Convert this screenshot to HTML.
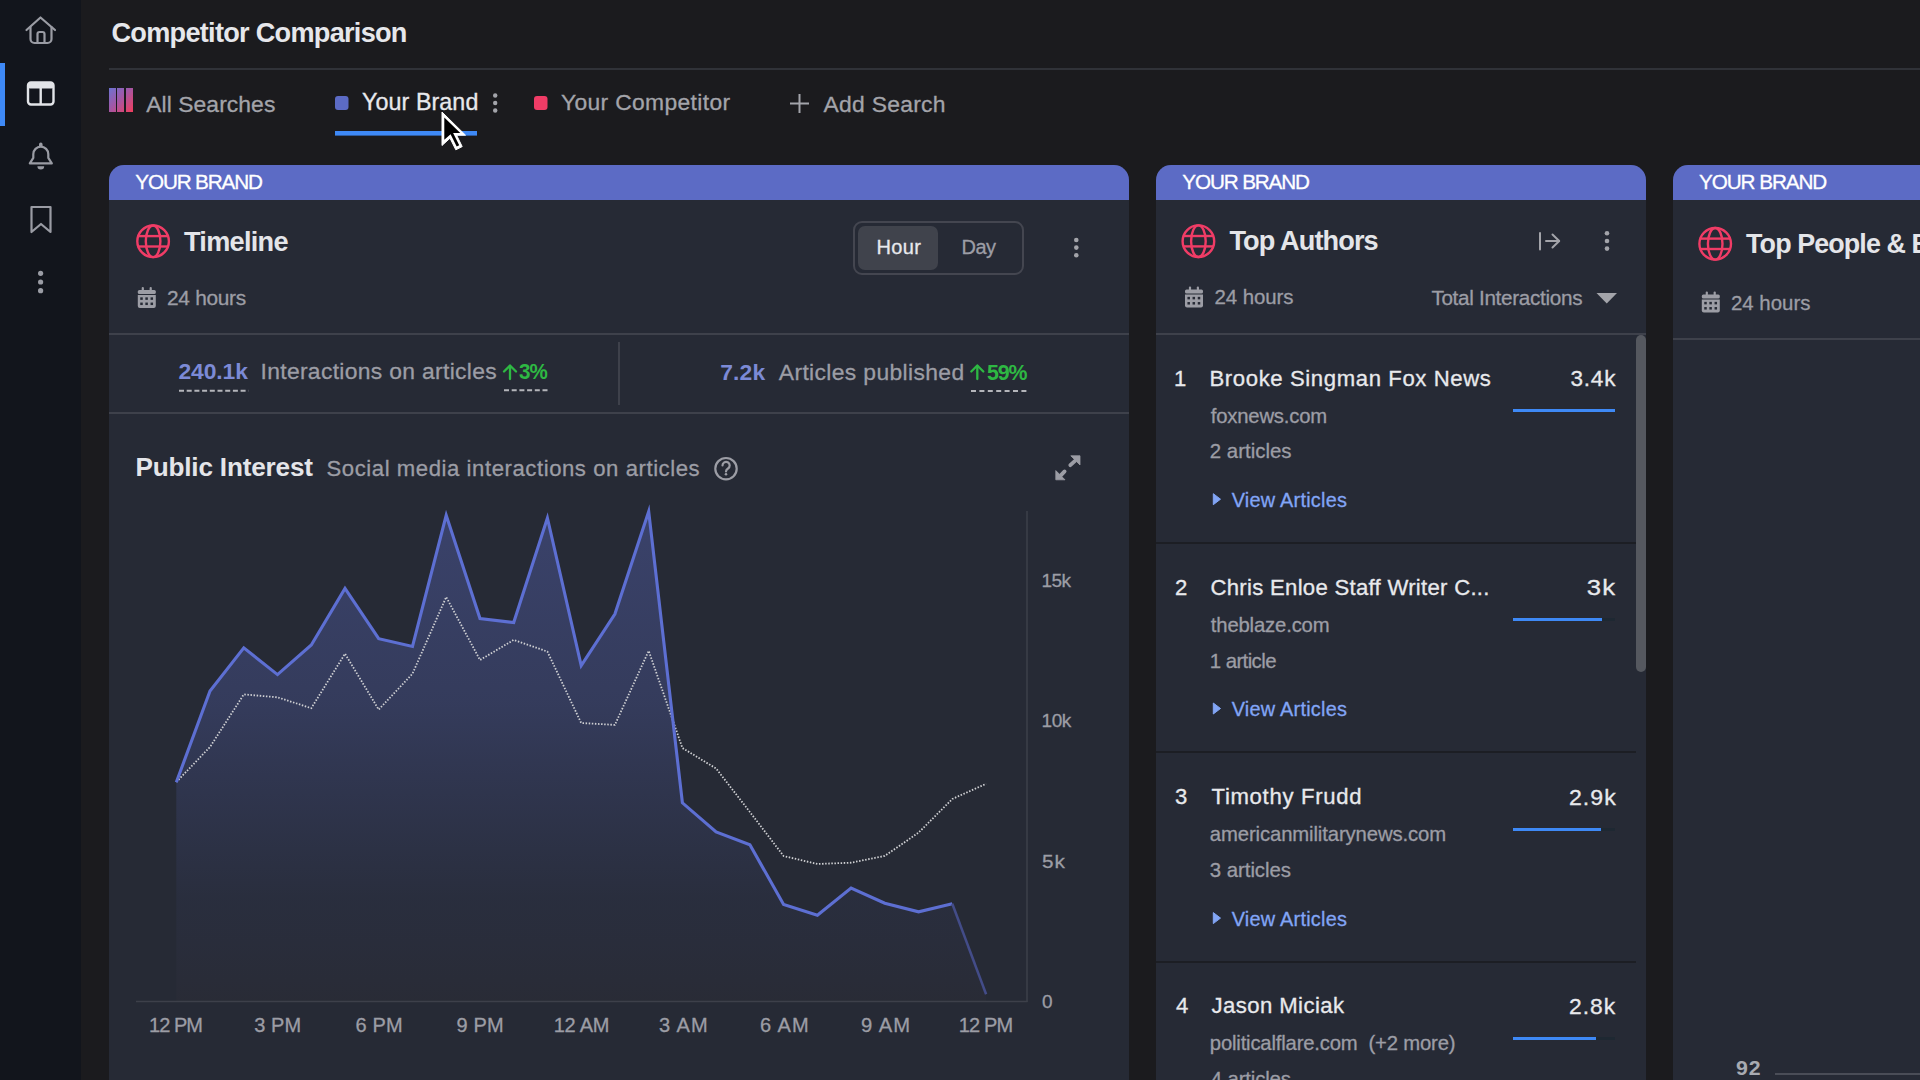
<!DOCTYPE html>
<html><head><meta charset="utf-8"><title>Competitor Comparison</title>
<style>
html,body{margin:0;padding:0;width:1920px;height:1080px;overflow:hidden;background:#1b1b1e;}
body{position:relative;font-family:"Liberation Sans",sans-serif;}
.t{position:absolute;white-space:pre;}
.r{-webkit-text-stroke:0.3px currentColor;}
.abs{position:absolute;}
</style></head><body>
<div class="abs" style="left:0px;top:0px;width:81px;height:1080px;background:#12151c;"></div>
<div class="abs" style="left:0px;top:63px;width:5px;height:63px;background:#3e89f6;"></div>
<div class="abs" style="left:109px;top:68px;width:1811px;height:2px;background:#303238;"></div>
<div class="abs" style="left:109px;top:165px;width:1020px;height:960px;background:#262a35;border-radius:15px 15px 0 0;overflow:hidden"><div style="height:35px;background:#5c6bc5"></div></div>
<div class="abs" style="left:1156px;top:165px;width:490px;height:960px;background:#262a35;border-radius:15px 15px 0 0;overflow:hidden"><div style="height:35px;background:#5c6bc5"></div></div>
<div class="abs" style="left:1673px;top:165px;width:400px;height:960px;background:#262a35;border-radius:15px 15px 0 0;overflow:hidden"><div style="height:35px;background:#5c6bc5"></div></div>
<div class="abs" style="left:109px;top:333px;width:1020px;height:2px;background:#3e414b;"></div>
<div class="abs" style="left:109px;top:412px;width:1020px;height:2px;background:#3e414b;"></div>
<div class="abs" style="left:618px;top:342px;width:2px;height:63px;background:#3e414b;"></div>
<div class="abs" style="left:853px;top:221px;width:167px;height:50px;border:2px solid #444650;border-radius:9px"></div>
<div class="abs" style="left:858px;top:226px;width:80px;height:44px;background:#40434c;border-radius:7px;"></div>
<div class="abs" style="left:1156px;top:333px;width:490px;height:2px;background:#3e414b;"></div>
<div class="abs" style="left:1156px;top:541.5px;width:480px;height:2px;background:#1c1e24;"></div>
<div class="abs" style="left:1156px;top:751px;width:480px;height:2px;background:#1c1e24;"></div>
<div class="abs" style="left:1156px;top:960.5px;width:480px;height:2px;background:#1c1e24;"></div>
<div class="abs" style="left:1635.5px;top:335px;width:10px;height:337px;background:#55585f;border-radius:5px;"></div>
<div class="abs" style="left:1513px;top:408.8px;width:101.8px;height:3.2px;background:#1e2832;"></div>
<div class="abs" style="left:1513px;top:408.8px;width:101.9px;height:3.2px;background:#3e89f6;"></div>
<div class="abs" style="left:1513px;top:618.1px;width:101.8px;height:3.2px;background:#1e2832;"></div>
<div class="abs" style="left:1513px;top:618.1px;width:89.2px;height:3.2px;background:#3e89f6;"></div>
<div class="abs" style="left:1513px;top:827.7px;width:101.8px;height:3.2px;background:#1e2832;"></div>
<div class="abs" style="left:1513px;top:827.7px;width:87.5px;height:3.2px;background:#3e89f6;"></div>
<div class="abs" style="left:1513px;top:1036.6px;width:101.8px;height:3.2px;background:#1e2832;"></div>
<div class="abs" style="left:1513px;top:1036.6px;width:83px;height:3.2px;background:#3e89f6;"></div>
<div class="abs" style="left:1673px;top:338px;width:247px;height:2px;background:#3e414b;"></div>
<div class="abs" style="left:1775px;top:1073px;width:145px;height:2px;background:#4a4d57;"></div>
<svg class="abs" style="left:0;top:0" width="1920" height="1080" viewBox="0 0 1920 1080">
<g fill="none" stroke="#9a9ca4" stroke-width="2.2" stroke-linecap="round" stroke-linejoin="round"><path d="M26.5 30 L40.5 17.5 L55 30"/><path d="M30.5 27 V39 a4 4 0 0 0 4 4 H47.5 a4 4 0 0 0 4 -4 V27"/><path d="M37.5 43 V34 a2 2 0 0 1 2 -2 H42.5 a2 2 0 0 1 2 2 V43"/></g>
<g><rect x="28" y="82.5" width="25.5" height="22" rx="3" fill="none" stroke="#e2e4e8" stroke-width="2.4"/><rect x="28" y="82.5" width="25.5" height="6" rx="2" fill="#e2e4e8"/><line x1="40.7" y1="87" x2="40.7" y2="104" stroke="#e2e4e8" stroke-width="2.4"/></g>
<g fill="none" stroke="#9a9ca4" stroke-width="2.2" stroke-linejoin="round" stroke-linecap="round"><path d="M29.8 163.4 H51.8 L48.3 157.8 V154.2 a7.5 7.5 0 0 0 -15 0 V157.8 Z"/></g><rect x="39" y="142.6" width="3.6" height="4.5" rx="1.8" fill="#9a9ca4"/><path d="M37.4 166.3 h6.8 a3.4 3.2 0 0 1 -6.8 0z" fill="#9a9ca4"/>
<path d="M31.5 207 H50.5 V232 L41 224 L31.5 232 Z" fill="none" stroke="#9a9ca4" stroke-width="2.2" stroke-linejoin="round"/>
<circle cx="40.6" cy="273.3" r="2.6" fill="#9a9ca4"/>
<circle cx="40.6" cy="282" r="2.6" fill="#9a9ca4"/>
<circle cx="40.6" cy="290.7" r="2.6" fill="#9a9ca4"/>
<defs><linearGradient id="ag" x1="108" y1="88" x2="133" y2="112" gradientUnits="userSpaceOnUse"><stop offset="0" stop-color="#6a74d4"/><stop offset="0.45" stop-color="#a058a8"/><stop offset="1" stop-color="#f33d5c"/></linearGradient><linearGradient id="cf" x1="0" y1="511" x2="0" y2="1001" gradientUnits="userSpaceOnUse"><stop offset="0" stop-color="#5c6bc5" stop-opacity="0.37"/><stop offset="0.39" stop-color="#5c6bc5" stop-opacity="0.27"/><stop offset="0.55" stop-color="#5c6bc5" stop-opacity="0.18"/><stop offset="0.79" stop-color="#5c6bc5" stop-opacity="0.06"/><stop offset="1" stop-color="#4a3a40" stop-opacity="0.08"/></linearGradient></defs>
<rect x="109" y="88" width="7" height="24" fill="url(#ag)"/>
<rect x="117" y="88" width="7" height="24" fill="url(#ag)"/>
<rect x="126" y="88" width="7" height="24" fill="url(#ag)"/>
<rect x="335" y="96" width="13.5" height="14" rx="3" fill="#5c6bc5"/>
<rect x="534" y="96" width="13.5" height="14" rx="3" fill="#f03c66"/>
<circle cx="495.2" cy="95.5" r="2.2" fill="#a3a4aa"/>
<circle cx="495.2" cy="103" r="2.2" fill="#a3a4aa"/>
<circle cx="495.2" cy="110.5" r="2.2" fill="#a3a4aa"/>
<g stroke="#a3a4aa" stroke-width="2"><line x1="790" y1="103.5" x2="809" y2="103.5"/><line x1="799.5" y1="94" x2="799.5" y2="113"/></g>
<rect x="335" y="131" width="142" height="4.6" fill="#3e89f6"/>
<g fill="none" stroke="#f03c66" stroke-width="2.4"><circle cx="153.1" cy="241.3" r="15.8"/><ellipse cx="153.1" cy="241.3" rx="7.3" ry="15.8"/><line x1="137.6" y1="236.10000000000002" x2="168.6" y2="236.10000000000002"/><line x1="137.6" y1="246.5" x2="168.6" y2="246.5"/></g>
<g fill="none" stroke="#f03c66" stroke-width="2.4"><circle cx="1198.4" cy="241.2" r="15.8"/><ellipse cx="1198.4" cy="241.2" rx="7.3" ry="15.8"/><line x1="1182.9" y1="236.0" x2="1213.9" y2="236.0"/><line x1="1182.9" y1="246.39999999999998" x2="1213.9" y2="246.39999999999998"/></g>
<g fill="none" stroke="#f03c66" stroke-width="2.4"><circle cx="1715.2" cy="243.8" r="15.8"/><ellipse cx="1715.2" cy="243.8" rx="7.3" ry="15.8"/><line x1="1699.7" y1="238.60000000000002" x2="1730.7" y2="238.60000000000002"/><line x1="1699.7" y1="249.0" x2="1730.7" y2="249.0"/></g>
<g fill="#9c9da5"><rect x="137.8" y="290" width="18" height="4" rx="1.5"/><rect x="141.70000000000002" y="287" width="2.2" height="4" rx="1"/><rect x="149.60000000000002" y="287" width="2.2" height="4" rx="1"/><path d="M137.8 295 H155.8 V306 a2 2 0 0 1 -2 2 H139.8 a2 2 0 0 1 -2 -2 Z"/></g><rect x="140.25" y="297.35" width="2.5" height="2.5" fill="#262a35"/><rect x="140.25" y="302.55" width="2.5" height="2.5" fill="#262a35"/><rect x="145.35000000000002" y="297.35" width="2.5" height="2.5" fill="#262a35"/><rect x="145.35000000000002" y="302.55" width="2.5" height="2.5" fill="#262a35"/><rect x="150.55" y="297.35" width="2.5" height="2.5" fill="#262a35"/><rect x="150.55" y="302.55" width="2.5" height="2.5" fill="#262a35"/>
<g fill="#9c9da5"><rect x="1185" y="289.5" width="18" height="4" rx="1.5"/><rect x="1188.9" y="286.5" width="2.2" height="4" rx="1"/><rect x="1196.8" y="286.5" width="2.2" height="4" rx="1"/><path d="M1185 294.5 H1203 V305.5 a2 2 0 0 1 -2 2 H1187 a2 2 0 0 1 -2 -2 Z"/></g><rect x="1187.45" y="296.85" width="2.5" height="2.5" fill="#262a35"/><rect x="1187.45" y="302.05" width="2.5" height="2.5" fill="#262a35"/><rect x="1192.55" y="296.85" width="2.5" height="2.5" fill="#262a35"/><rect x="1192.55" y="302.05" width="2.5" height="2.5" fill="#262a35"/><rect x="1197.75" y="296.85" width="2.5" height="2.5" fill="#262a35"/><rect x="1197.75" y="302.05" width="2.5" height="2.5" fill="#262a35"/>
<g fill="#9c9da5"><rect x="1701.8" y="294.5" width="18" height="4" rx="1.5"/><rect x="1705.7" y="291.5" width="2.2" height="4" rx="1"/><rect x="1713.6" y="291.5" width="2.2" height="4" rx="1"/><path d="M1701.8 299.5 H1719.8 V310.5 a2 2 0 0 1 -2 2 H1703.8 a2 2 0 0 1 -2 -2 Z"/></g><rect x="1704.25" y="301.85" width="2.5" height="2.5" fill="#262a35"/><rect x="1704.25" y="307.05" width="2.5" height="2.5" fill="#262a35"/><rect x="1709.35" y="301.85" width="2.5" height="2.5" fill="#262a35"/><rect x="1709.35" y="307.05" width="2.5" height="2.5" fill="#262a35"/><rect x="1714.55" y="301.85" width="2.5" height="2.5" fill="#262a35"/><rect x="1714.55" y="307.05" width="2.5" height="2.5" fill="#262a35"/>
<circle cx="1076.3" cy="240" r="2.3" fill="#a3a4aa"/>
<circle cx="1076.3" cy="247.6" r="2.3" fill="#a3a4aa"/>
<circle cx="1076.3" cy="255.2" r="2.3" fill="#a3a4aa"/>
<circle cx="1607" cy="233.3" r="2.3" fill="#a3a4aa"/>
<circle cx="1607" cy="241" r="2.3" fill="#a3a4aa"/>
<circle cx="1607" cy="248.6" r="2.3" fill="#a3a4aa"/>
<g stroke="#a3a4aa" stroke-width="2" fill="none" stroke-linecap="round" stroke-linejoin="round"><line x1="1540" y1="233" x2="1540" y2="249.5"/><line x1="1546" y1="241" x2="1559" y2="241"/><path d="M1552.5 234.5 L1559.2 241 L1552.5 247.5"/></g>
<path d="M1596.5 293 H1617 L1606.75 303.5 Z" fill="#a3a4aa"/>
<g stroke="#2eb843" stroke-width="2.3" fill="none" stroke-linecap="round" stroke-linejoin="round"><line x1="510" y1="366" x2="510" y2="379"/><path d="M504 371.5 L510 365.5 L516 371.5"/></g>
<g stroke="#2eb843" stroke-width="2.3" fill="none" stroke-linecap="round" stroke-linejoin="round"><line x1="977.3" y1="366" x2="977.3" y2="379"/><path d="M971.3 371.5 L977.3 365.5 L983.3 371.5"/></g>
<line x1="179" y1="390.8" x2="248.5" y2="390.8" stroke="#b4b5ba" stroke-width="2" stroke-dasharray="5 2.7"/>
<line x1="504" y1="390.2" x2="547.5" y2="390.2" stroke="#b4b5ba" stroke-width="2" stroke-dasharray="5 2.7"/>
<line x1="971" y1="391" x2="1027.5" y2="391" stroke="#b4b5ba" stroke-width="2" stroke-dasharray="5 3.4"/>
<circle cx="726" cy="468.7" r="10.7" fill="none" stroke="#9c9da5" stroke-width="2.2"/><path d="M722.5 465.5 a3.6 3.6 0 1 1 5.5 3 c-1.5 0.9 -2 1.6 -2 3" fill="none" stroke="#9c9da5" stroke-width="2.2" stroke-linecap="round"/><circle cx="726" cy="474.3" r="1.3" fill="#9c9da5"/>
<g fill="#9c9da5" stroke="#9c9da5" stroke-width="0.8" stroke-linejoin="round"><path d="M1070.8 455.8 H1080 V465 Z"/><path d="M1055.8 470.6 V479.8 H1065 Z"/></g><g stroke="#9c9da5" stroke-width="3.8" stroke-linecap="round"><line x1="1075" y1="460.8" x2="1070.3" y2="465.2"/><line x1="1060.8" y1="475.4" x2="1064.6" y2="471.4"/></g>
<path d="M176.3,1001 L176.3,782.3 L210.0,691.0 L243.8,647.9 L277.5,674.6 L311.3,645.0 L345.0,588.5 L378.7,638.7 L412.5,646.5 L446.2,515.3 L480.0,618.6 L513.7,622.6 L547.4,518.0 L581.2,665.7 L614.9,614.0 L648.7,511.5 L682.4,802.8 L716.1,832.0 L749.9,844.8 L783.6,904.4 L817.4,915.3 L851.1,888.0 L884.8,903.2 L918.6,911.8 L952.3,903.8 L986.1,994.2 L986.1,1001 Z" fill="url(#cf)"/>
<line x1="136" y1="1001.5" x2="1027.5" y2="1001.5" stroke="#3d404a" stroke-width="1.5"/>
<line x1="1027" y1="511" x2="1027" y2="1002" stroke="#3d404a" stroke-width="1.5"/>
<polyline points="176.3,782.0 210.0,747.0 243.8,694.4 277.5,697.3 311.3,708.2 345.0,653.7 378.7,709.6 412.5,673.7 446.2,597.0 480.0,660.0 513.7,639.9 547.4,651.6 581.2,723.0 614.9,724.9 648.7,650.8 682.4,748.0 716.1,768.5 749.9,812.0 783.6,856.0 817.4,864.0 851.1,862.7 884.8,855.9 918.6,832.6 952.3,799.0 986.1,783.8" fill="none" stroke="#cfd0d3" stroke-width="1.8" stroke-dasharray="1.5 1.6"/>
<polyline points="176.3,782.3 210.0,691.0 243.8,647.9 277.5,674.6 311.3,645.0 345.0,588.5 378.7,638.7 412.5,646.5 446.2,515.3 480.0,618.6 513.7,622.6 547.4,518.0 581.2,665.7 614.9,614.0 648.7,511.5 682.4,802.8 716.1,832.0 749.9,844.8 783.6,904.4 817.4,915.3 851.1,888.0 884.8,903.2 918.6,911.8 952.3,903.8" fill="none" stroke="#5d6fd2" stroke-width="3.1" stroke-linejoin="miter" stroke-miterlimit="10"/>
<line x1="952.3" y1="903.8" x2="986.1" y2="994.2" stroke="#434c88" stroke-width="2.5"/>
<path d="M1213.3 493.7 V504.7 L1220.5 499.2 Z" fill="#82a5f5" stroke="#82a5f5" stroke-width="1" stroke-linejoin="round"/>
<path d="M1213.3 703.0 V714.0 L1220.5 708.5 Z" fill="#82a5f5" stroke="#82a5f5" stroke-width="1" stroke-linejoin="round"/>
<path d="M1213.3 912.6 V923.6 L1220.5 918.1 Z" fill="#82a5f5" stroke="#82a5f5" stroke-width="1" stroke-linejoin="round"/>
<path d="M1213.3 1121.5 V1132.5 L1220.5 1127.0 Z" fill="#82a5f5" stroke="#82a5f5" stroke-width="1" stroke-linejoin="round"/>
</svg>
<div class="t" style="left:111.5px;top:19px;font-size:27.14px;line-height:27.14px;font-weight:700;letter-spacing:-0.725px;color:#e6e7eb">Competitor Comparison</div>
<div class="t r" style="left:146.25px;top:93.3px;font-size:22.86px;line-height:22.86px;font-weight:400;letter-spacing:0.068px;color:#a3a4aa">All Searches</div>
<div class="t r" style="left:362px;top:90.8px;font-size:23.29px;line-height:23.29px;font-weight:400;letter-spacing:0.078px;color:#e8e9ec">Your Brand</div>
<div class="t r" style="left:561px;top:90.8px;font-size:22.86px;line-height:22.86px;font-weight:400;letter-spacing:0.336px;color:#a3a4aa">Your Competitor</div>
<div class="t r" style="left:823.6px;top:93px;font-size:22.86px;line-height:22.86px;font-weight:400;letter-spacing:0.267px;color:#a3a4aa">Add Search</div>
<div class="t r" style="left:135.25px;top:172px;font-size:20.71px;line-height:20.71px;font-weight:400;letter-spacing:-1.139px;color:#ffffff">YOUR BRAND</div>
<div class="t r" style="left:1182.3px;top:172px;font-size:20.71px;line-height:20.71px;font-weight:400;letter-spacing:-1.144px;color:#ffffff">YOUR BRAND</div>
<div class="t r" style="left:1699px;top:172px;font-size:20.71px;line-height:20.71px;font-weight:400;letter-spacing:-1.083px;color:#ffffff">YOUR BRAND</div>
<div class="t" style="left:184px;top:228px;font-size:27.14px;line-height:27.14px;font-weight:700;letter-spacing:-0.714px;color:#e4e5e9">Timeline</div>
<div class="t r" style="left:167px;top:288.3px;font-size:20.86px;line-height:20.86px;font-weight:400;letter-spacing:-0.286px;color:#9c9da5">24 hours</div>
<div class="t r" style="left:876.6px;top:237px;font-size:20.0px;line-height:20.0px;font-weight:400;letter-spacing:0.333px;color:#e8e9ec">Hour</div>
<div class="t r" style="left:961.5px;top:237px;font-size:20.0px;line-height:20.0px;font-weight:400;letter-spacing:-0.55px;color:#9c9da5">Day</div>
<div class="t" style="left:178.5px;top:360.25px;font-size:22.86px;line-height:22.86px;font-weight:700;letter-spacing:-0.1px;color:#7c8ad6">240.1k</div>
<div class="t r" style="left:260.5px;top:360.25px;font-size:22.86px;line-height:22.86px;font-weight:400;letter-spacing:0.326px;color:#9c9da5">Interactions on articles</div>
<div class="t" style="left:519px;top:360.25px;font-size:22.86px;line-height:22.86px;font-weight:700;letter-spacing:-1.2px;color:#2eb843;transform:scaleX(0.9);transform-origin:1px 0">3%</div>
<div class="t" style="left:720.25px;top:360.8px;font-size:22.86px;line-height:22.86px;font-weight:700;letter-spacing:0.117px;color:#7c8ad6">7.2k</div>
<div class="t r" style="left:778.8px;top:360.8px;font-size:22.86px;line-height:22.86px;font-weight:400;letter-spacing:0.365px;color:#9c9da5">Articles published</div>
<div class="t" style="left:986.8px;top:360.8px;font-size:22.86px;line-height:22.86px;font-weight:700;letter-spacing:-1.2px;color:#2eb843;transform:scaleX(0.9333);transform-origin:1px 0">59%</div>
<div class="t" style="left:135.4px;top:453.6px;font-size:26.14px;line-height:26.14px;font-weight:700;letter-spacing:-0.171px;color:#e4e5e9">Public Interest</div>
<div class="t r" style="left:326.5px;top:457.6px;font-size:22.14px;line-height:22.14px;font-weight:400;letter-spacing:0.561px;color:#9c9da5">Social media interactions on articles</div>
<div class="t r" style="left:1041.5px;top:570.7px;font-size:19.0px;line-height:19.0px;font-weight:400;letter-spacing:-0.6px;color:#9c9da5">15k</div>
<div class="t r" style="left:1041.5px;top:710.7px;font-size:19.0px;line-height:19.0px;font-weight:400;letter-spacing:-0.4px;color:#9c9da5">10k</div>
<div class="t r" style="left:1042px;top:852.1px;font-size:19.0px;line-height:19.0px;font-weight:400;letter-spacing:1.0px;color:#9c9da5;transform:scaleX(1.09);transform-origin:1px 0">5k</div>
<div class="t r" style="left:1042px;top:991.6px;font-size:19.0px;line-height:19.0px;font-weight:400;letter-spacing:0px;color:#9c9da5">0</div>
<div class="t r" style="left:149px;top:1015px;font-size:20.0px;line-height:20.0px;font-weight:400;letter-spacing:-0.95px;color:#9c9da5">12 PM</div>
<div class="t r" style="left:254.3px;top:1015px;font-size:20.0px;line-height:20.0px;font-weight:400;letter-spacing:0.033px;color:#9c9da5">3 PM</div>
<div class="t r" style="left:355.4px;top:1015px;font-size:20.0px;line-height:20.0px;font-weight:400;letter-spacing:0.2px;color:#9c9da5">6 PM</div>
<div class="t r" style="left:456.5px;top:1015px;font-size:20.0px;line-height:20.0px;font-weight:400;letter-spacing:0.2px;color:#9c9da5">9 PM</div>
<div class="t r" style="left:553.7px;top:1015px;font-size:20.0px;line-height:20.0px;font-weight:400;letter-spacing:-0.25px;color:#9c9da5">12 AM</div>
<div class="t r" style="left:658.6px;top:1015px;font-size:20.0px;line-height:20.0px;font-weight:400;letter-spacing:1.0px;color:#9c9da5;transform:scaleX(1.0022);transform-origin:1px 0">3 AM</div>
<div class="t r" style="left:759.7px;top:1015px;font-size:20.0px;line-height:20.0px;font-weight:400;letter-spacing:1.0px;color:#9c9da5;transform:scaleX(1.0022);transform-origin:1px 0">6 AM</div>
<div class="t r" style="left:860.8px;top:1015px;font-size:20.0px;line-height:20.0px;font-weight:400;letter-spacing:1.0px;color:#9c9da5;transform:scaleX(1.0109);transform-origin:1px 0">9 AM</div>
<div class="t r" style="left:958.8px;top:1015px;font-size:20.0px;line-height:20.0px;font-weight:400;letter-spacing:-0.85px;color:#9c9da5">12 PM</div>
<div class="t" style="left:1229.4px;top:227.25px;font-size:27.14px;line-height:27.14px;font-weight:700;letter-spacing:-0.89px;color:#e4e5e9">Top Authors</div>
<div class="t r" style="left:1214.6px;top:287px;font-size:20.43px;line-height:20.43px;font-weight:400;letter-spacing:-0.086px;color:#9c9da5">24 hours</div>
<div class="t r" style="left:1431.4px;top:287.8px;font-size:20.71px;line-height:20.71px;font-weight:400;letter-spacing:-0.318px;color:#9c9da5">Total Interactions</div>
<div class="t r" style="left:1174px;top:367.5px;font-size:22.14px;line-height:22.14px;font-weight:400;letter-spacing:0px;color:#e8e9ec">1</div>
<div class="t r" style="left:1209.5px;top:367.5px;font-size:22.14px;line-height:22.14px;font-weight:400;letter-spacing:0.605px;color:#e8e9ec">Brooke Singman Fox News</div>
<div class="t r" style="left:1570.5px;top:368.0px;font-size:22.57px;line-height:22.57px;font-weight:400;letter-spacing:0.767px;color:#e8e9ec">3.4k</div>
<div class="t r" style="left:1210.8px;top:405.5px;font-size:20.29px;line-height:20.29px;font-weight:400;letter-spacing:-0.2px;color:#9c9da5">foxnews.com</div>
<div class="t r" style="left:1209.8px;top:441.3px;font-size:20.43px;line-height:20.43px;font-weight:400;letter-spacing:0.0px;color:#9c9da5">2 articles</div>
<div class="t r" style="left:1231.7px;top:490.7px;font-size:19.86px;line-height:19.86px;font-weight:400;letter-spacing:0.25px;color:#82a5f5">View Articles</div>
<div class="t r" style="left:1175px;top:576.8px;font-size:22.14px;line-height:22.14px;font-weight:400;letter-spacing:0px;color:#e8e9ec">2</div>
<div class="t r" style="left:1210.5px;top:576.8px;font-size:22.14px;line-height:22.14px;font-weight:400;letter-spacing:0.286px;color:#e8e9ec">Chris Enloe Staff Writer C...</div>
<div class="t r" style="left:1586.5px;top:577.3px;font-size:22.57px;line-height:22.57px;font-weight:400;letter-spacing:1.0px;color:#e8e9ec;transform:scaleX(1.1375);transform-origin:1px 0">3k</div>
<div class="t r" style="left:1210.8px;top:614.8px;font-size:20.29px;line-height:20.29px;font-weight:400;letter-spacing:-0.164px;color:#9c9da5">theblaze.com</div>
<div class="t r" style="left:1209.8px;top:650.6px;font-size:20.43px;line-height:20.43px;font-weight:400;letter-spacing:-0.6px;color:#9c9da5">1 article</div>
<div class="t r" style="left:1231.7px;top:700.0px;font-size:19.86px;line-height:19.86px;font-weight:400;letter-spacing:0.25px;color:#82a5f5">View Articles</div>
<div class="t r" style="left:1175px;top:786.4px;font-size:22.14px;line-height:22.14px;font-weight:400;letter-spacing:0px;color:#e8e9ec">3</div>
<div class="t r" style="left:1211.5px;top:786.4px;font-size:22.14px;line-height:22.14px;font-weight:400;letter-spacing:0.692px;color:#e8e9ec">Timothy Frudd</div>
<div class="t r" style="left:1568.7px;top:786.9px;font-size:22.57px;line-height:22.57px;font-weight:400;letter-spacing:1.0px;color:#e8e9ec;transform:scaleX(1.025);transform-origin:1px 0">2.9k</div>
<div class="t r" style="left:1209.8px;top:824.4px;font-size:20.29px;line-height:20.29px;font-weight:400;letter-spacing:-0.113px;color:#9c9da5">americanmilitarynews.com</div>
<div class="t r" style="left:1209.8px;top:860.2px;font-size:20.43px;line-height:20.43px;font-weight:400;letter-spacing:-0.056px;color:#9c9da5">3 articles</div>
<div class="t r" style="left:1231.7px;top:909.6px;font-size:19.86px;line-height:19.86px;font-weight:400;letter-spacing:0.25px;color:#82a5f5">View Articles</div>
<div class="t r" style="left:1176px;top:995.3px;font-size:22.14px;line-height:22.14px;font-weight:400;letter-spacing:0px;color:#e8e9ec">4</div>
<div class="t r" style="left:1211.5px;top:995.3px;font-size:22.14px;line-height:22.14px;font-weight:400;letter-spacing:0.427px;color:#e8e9ec">Jason Miciak</div>
<div class="t r" style="left:1569.2px;top:995.8px;font-size:22.57px;line-height:22.57px;font-weight:400;letter-spacing:1.0px;color:#e8e9ec;transform:scaleX(1.0136);transform-origin:1px 0">2.8k</div>
<div class="t r" style="left:1209.8px;top:1033.3px;font-size:20.29px;line-height:20.29px;font-weight:400;letter-spacing:-0.182px;color:#9c9da5">politicalflare.com  (+2 more)</div>
<div class="t r" style="left:1210.8px;top:1069.1px;font-size:20.43px;line-height:20.43px;font-weight:400;letter-spacing:-0.167px;color:#9c9da5">4 articles</div>
<div class="t r" style="left:1231.7px;top:1118.5px;font-size:19.86px;line-height:19.86px;font-weight:400;letter-spacing:0.25px;color:#82a5f5">View Articles</div>
<div class="t" style="left:1746.1px;top:230.8px;font-size:26.86px;line-height:26.86px;font-weight:700;letter-spacing:-0.89px;color:#e4e5e9">Top People &amp; Entities</div>
<div class="t r" style="left:1730.9px;top:292.6px;font-size:20.43px;line-height:20.43px;font-weight:400;letter-spacing:0.014px;color:#9c9da5">24 hours</div>
<div class="t" style="left:1735.7px;top:1058.7px;font-size:19.86px;line-height:19.86px;font-weight:700;letter-spacing:1.0px;color:#a8aab1;transform:scaleX(1.0727);transform-origin:1px 0">92</div>

<svg class="abs" style="left:0;top:0" width="1920" height="1080" viewBox="0 0 1920 1080">
<path d="M442 112 V145.5 L450 138.2 L455.8 149.8 L462.2 146.6 L456.6 135.2 L465.5 135.2 Z" fill="#fff" stroke="#fff" stroke-width="1" stroke-linejoin="round"/><path d="M444.3 117.5 V139.8 L450.6 134.2 L456.7 146.5 L459.2 145.3 L453.1 133.1 L460.3 133.1 Z" fill="#000"/>
</svg>
</body></html>
